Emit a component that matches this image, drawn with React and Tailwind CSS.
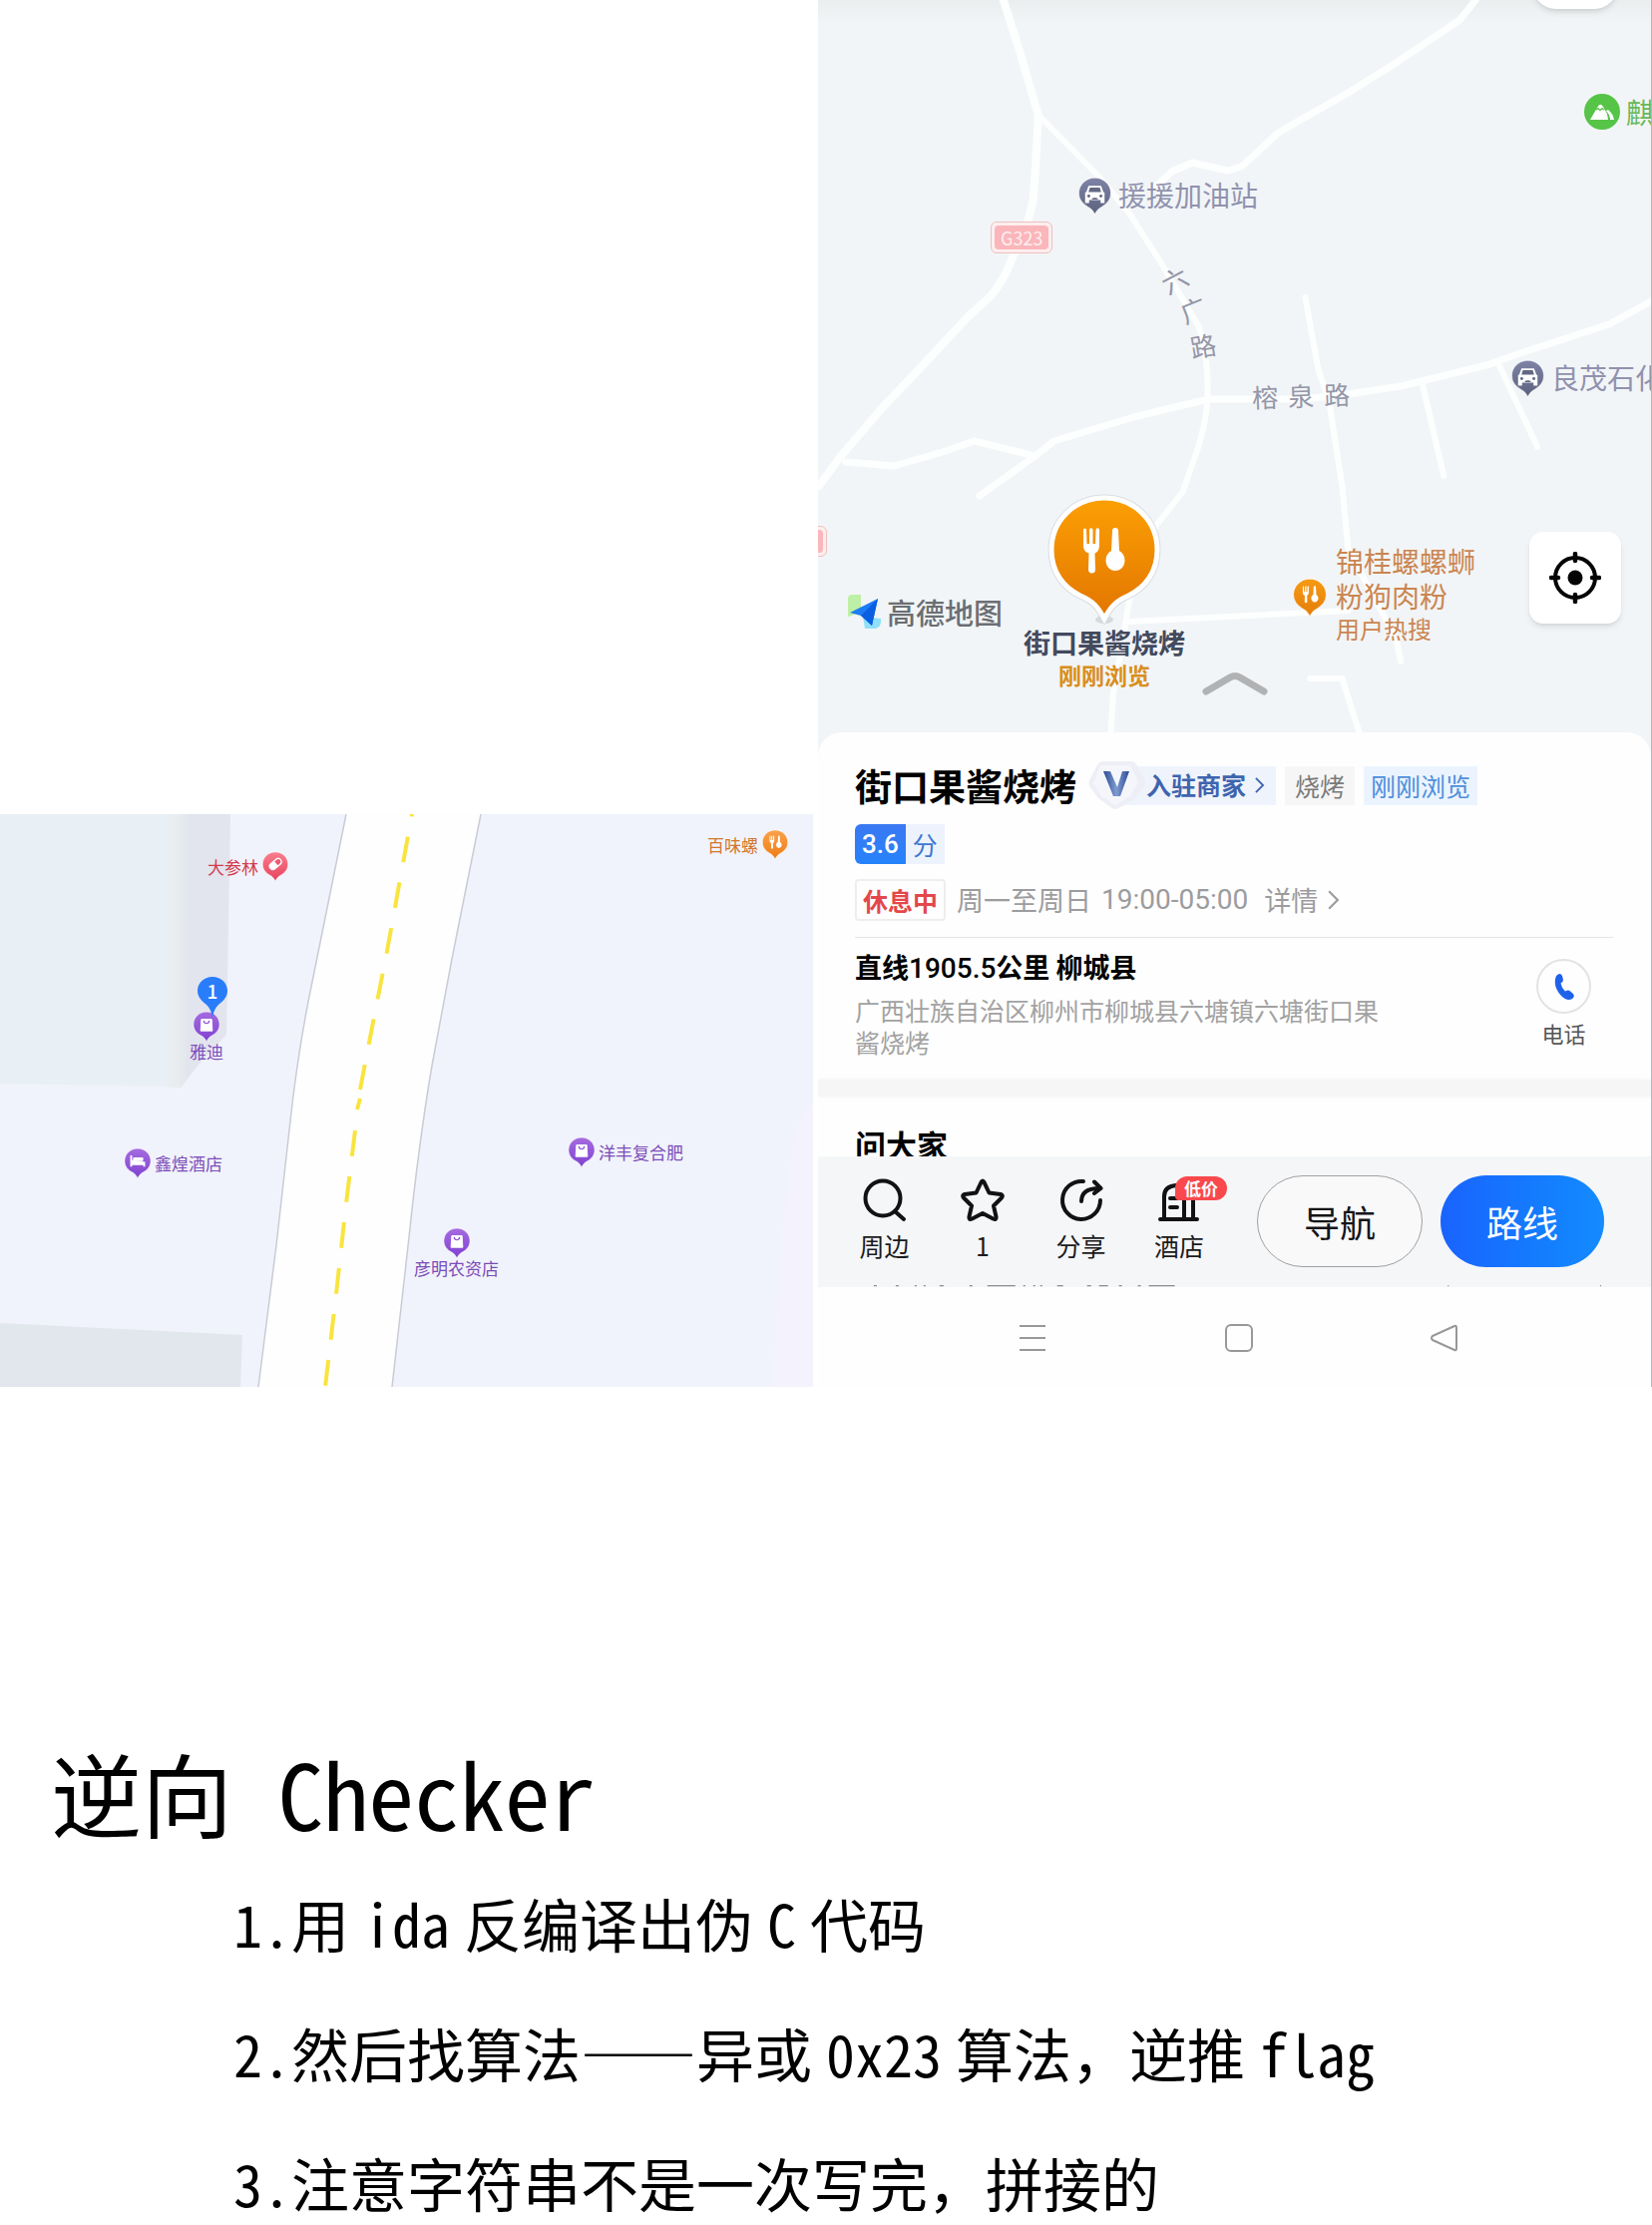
import React from 'react';

const shopPath = 'M15 1C7 1 1 7 1 14.500C1 20 4.500 24 9 26.500C12 28 13.500 30 15 33C16.500 30 18 28 21 26.500C25.500 24 29 20 29 14.500C29 7 23 1 15 1Z';

function ForkSpoon() {
  return (
    <g fill="#fff">
      <path d="M0 1a1.500 1.500 0 0 1 3 0l.5 14h2.500V1a1.500 1.500 0 0 1 3.500 0v14H12l.5-14a1.500 1.500 0 0 1 3.500 0v16c0 4-2 6.500-4.500 7.500l.5 16.500a3 3 0 0 1-7 0l.5-16.500C2 23.500 0 21 0 17Z" transform="translate(3 1)" />
      <path d="M32 3a3 3 0 0 1 6 0l1 20c3.500 2 5.500 5.500 5.500 9.500 0 6-4 10.500-9.500 10.500S25.500 38.500 25.500 32.500c0-4 2-7.500 5.500-9.500Z" />
    </g>
  );
}

function Glyph({ kind }) {
  if (kind === 'bag') {
    return (
      <g>
        <path d="M9.500 9h11l.8 12.500H8.700Z" fill="#fff" stroke="#fff" strokeLinejoin="round" />
        <path d="M12 10.500c.5 4 5.500 4 6 0" fill="none" stroke="#8f52d8" strokeWidth="1.300" />
      </g>
    );
  }
  if (kind === 'bed') {
    return (
      <g fill="#fff">
        <path d="M7 8.500h2v5l14 2v5h-2v-1.500H9v1.500H7Z" />
        <rect x="10" y="10.500" width="11" height="4" rx="1" />
      </g>
    );
  }
  if (kind === 'pill') {
    return (
      <g transform="rotate(-40 15 14)">
        <rect x="7" y="10" width="16" height="8.500" rx="4.200" fill="#fff" />
        <path d="M16 11.500h3a2.700 2.700 0 0 1 0 5.500h-3Z" fill="#ee5b70" />
      </g>
    );
  }
  if (kind === 'food') {
    return (
      <g transform="translate(8 7) scale(.32)">
        <ForkSpoon />
      </g>
    );
  }
  return (
    <g>
      <path d="M9.500 8h11l2 5.500 1 .5v9h-3.500v-2.500h-10V23H6.500v-9l1-.5Z" fill="#fff" />
      <path d="M10.700 9.500h8.600l1.200 4h-11Z" fill="#636884" />
      <circle cx="9.700" cy="17" r="1.300" fill="#636884" />
      <circle cx="20.300" cy="17" r="1.300" fill="#636884" />
      <path d="M12 20l1.500-1.500h3L18 20Z" fill="#636884" />
    </g>
  );
}

function Pin({ kind, from, to, className }) {
  const id = 'pin-' + kind + from.slice(1);
  return (
    <svg viewBox="0 0 30 34" className={className} aria-hidden="true">
      <defs>
        <linearGradient id={id} x1="0" y1="0" x2="0" y2="1">
          <stop offset="0" stopColor={from} />
          <stop offset="1" stopColor={to} />
        </linearGradient>
      </defs>
      <path d={shopPath} fill={'url(#' + id + ')'} stroke="#fff" strokeOpacity=".6" />
      <Glyph kind={kind} />
    </svg>
  );
}

function StreetMap() {
  return (
    <section aria-label="街道地图" className="relative h-[574px] overflow-hidden bg-[#f0f3fb] text-[17px] leading-[18px]">
      <svg viewBox="0 0 815 574" preserveAspectRatio="none" className="h-full w-full" aria-hidden="true">
        <defs>
          <linearGradient id="wall" x1="0" x2="1">
            <stop offset="0" stopColor="#e8eff5" />
            <stop offset=".5" stopColor="#e8ecee" />
            <stop offset="1" stopColor="#e0e4ed" />
          </linearGradient>
        </defs>
        <path d="M170 0H231L227 221L200 250L181 274L165 273Z" fill="#e2e5ee" />
        <path d="M165 0H192L186 268L181 274L165 273Z" fill="url(#wall)" />
        <path d="M0 0H167V273L0 270Z" fill="#e8eff5" />
        <path d="M0 510L243 522L241 574H0Z" fill="#e2e6ed" />
        <path d="M815 288L798 313L790 367L783 435L775 574H815Z" fill="#f4f2fd" />
        <path d="M347 0L313 168Q301 225 293 290L277 432L259 574H393L410 424Q420 328 433 252L453 145L482 0Z" fill="#fefefe" />
        <path d="M347 0L313 168Q301 225 293 290L277 432L259 574M393 574L410 424Q420 328 433 252L453 145L482 0" fill="none" stroke="#c9ccd3" strokeWidth="1.500" />
        <g fill="none" stroke="#f9e43f" strokeWidth="4">
          <path d="M413 0L388 137L370 229L361 276" strokeDasharray="26 20.500" strokeDashoffset="23.500" />
          <path d="M361 285L358 296" />
          <path d="M356 317L347 390L337 481L326 574" strokeDasharray="26 20.300" />
        </g>
      </svg>
      <div className="absolute top-[37px] left-[208px] flex items-center gap-[3px] text-[#d33a4c]">
        大参林
        <Pin kind="pill" from="#f8808e" to="#e8405c" className="h-[31px] w-7" />
      </div>
      <div className="absolute top-[197px] left-[187px] flex w-10 flex-col items-center text-[#7d4bb8]">
        <Pin kind="bag" from="#a56be0" to="#7f41d0" className="h-8 w-7" />
        <span className="whitespace-nowrap">雅迪</span>
      </div>
      <div className="absolute top-[162px] left-[197px] h-[42px] w-8">
        <svg viewBox="0 0 32 42" className="h-full w-full" aria-hidden="true">
          <path d="M16 1C7 1 1 7.500 1 15C1 21 5 25 10 29C14 33 15 37 16 42C17 37 18 33 22 29C27 25 31 21 31 15C31 7.500 25 1 16 1Z" fill="#2a7dfa" />
        </svg>
        <span className="absolute inset-x-0 top-[6px] text-center text-[19px] font-medium text-white">1</span>
      </div>
      <div className="absolute top-[334px] left-[124px] flex items-center gap-[3px] text-[#7d4bb8]">
        <Pin kind="bed" from="#a56be0" to="#7f41d0" className="h-8 w-7" />
        鑫煌酒店
      </div>
      <div className="absolute top-[323px] left-[569px] flex items-center gap-[3px] text-[#7d4bb8]">
        <Pin kind="bag" from="#a56be0" to="#7f41d0" className="h-8 w-7" />
        洋丰复合肥
      </div>
      <div className="absolute top-[414px] left-[415px] flex flex-col items-center text-[#7d4bb8]">
        <Pin kind="bag" from="#a56be0" to="#7f41d0" className="h-8 w-7" />
        彦明农资店
      </div>
      <div className="absolute top-[15px] right-6 flex items-center gap-[3px] text-[#d2762a]">
        百味螺
        <Pin kind="food" from="#f9a24c" to="#ef7c12" className="h-[31px] w-7" />
      </div>
    </section>
  );
}

function PlaceMap() {
  return (
    <section aria-label="高德地图" className="relative h-[758px] overflow-hidden bg-[#f2f5f7]">
      <svg viewBox="0 0 836 758" preserveAspectRatio="none" className="h-full w-full" aria-hidden="true">
        <defs>
          <linearGradient id="shade" x1="0" y1="0" x2="0" y2="1">
            <stop offset="0" stopColor="#ebeeef" />
            <stop offset="1" stopColor="#f2f5f7" />
          </linearGradient>
        </defs>
        <rect width="836" height="24" fill="url(#shade)" />
        <g fill="none" stroke="#fdfefe" strokeWidth="8" strokeLinejoin="round" strokeLinecap="round">
          <path d="M186 0L202 50L221 115Q219 160 216 200Q210 230 197 253Q188 280 173 297L151 317L92 380L66 407L23 457L1 487" />
          <path d="M221 115L280 175L312 213L344 263L382 327Q390 350 391 380V400Q389 425 382 447L366 493L339 527L312 603L309 623L296 697L293 750" strokeWidth="6" />
          <path d="M660 0L644 20L580 63L532 93L462 133L425 167L411 171L376 163L355 172L339 187" strokeWidth="7" />
          <path d="M836 302L794 325L708 353L671 366L585 387L532 395L488 400H392L317 418L237 442L218 457L157 442L125 453L76 467L28 463M218 457L162 497" strokeWidth="7" />
          <path d="M489 298L502 370L513 403L526 487L532 550L580 640L585 663M607 387L628 477M684 367L722 448M312 623L532 612M494 680H526L545 740" strokeWidth="6" />
        </g>
      </svg>

      <div className="absolute -top-20 right-[33px] h-[89px] w-[86px] rounded-3xl bg-white shadow-md" />

      <div className="absolute top-[177px] left-[260px] flex items-center gap-[6px] text-[28px] leading-9 whitespace-nowrap text-[#9092ae]">
        <Pin kind="car" from="#7f84a8" to="#5a607c" className="h-[39px] w-[35px]" />
        <span className="mb-[3px]">援援加油站</span>
      </div>
      <div className="absolute top-[222px] left-[173px] rounded-md border border-[#efc0c0] bg-[#fdeeee] p-[3px]">
        <div className="rounded-sm bg-[#fab6bb] px-[6px] text-[18px] leading-6 text-[#fdeeee]">G323</div>
      </div>
      <div className="absolute top-[527px] -left-10 h-[31px] w-[49px] rounded-md border border-[#efc0c0] bg-[#fdeeee] p-[3px]">
        <div className="h-full rounded-sm bg-[#fab6bb]" />
      </div>
      <span className="absolute top-[267px] left-[344px] -rotate-[28deg] text-[26px] leading-[26px] text-[#9597a8]">六</span>
      <span className="absolute top-[297px] left-[363px] -rotate-[22deg] text-[26px] leading-[26px] text-[#9597a8]">广</span>
      <span className="absolute top-[333px] left-[373px] -rotate-[10deg] text-[26px] leading-[26px] text-[#9597a8]">路</span>
      <div className="absolute top-[380px] left-[435px] flex -rotate-2 gap-[10px] text-[26px] leading-8 text-[#9597a8]">
        <span>榕</span>
        <span>泉</span>
        <span>路</span>
      </div>

      <div className="absolute top-[94px] left-[768px] flex items-center gap-[6px] text-[28px] leading-9 whitespace-nowrap text-[#69b85a]">
        <svg viewBox="0 0 36 36" className="h-9 w-9" aria-hidden="true">
          <circle cx="18" cy="18" r="18" fill="#56c447" />
          <path d="M6 26L13 14Q16 8 19 13L23 20L24 26ZM24 16Q29 20 30 26H26Q26 21 22 17Z" fill="#fff" />
          <path d="M12 16l2-1.500 2 2 2-2 2 1.500" fill="none" stroke="#56c447" strokeWidth="1.300" />
        </svg>
        麒麟
      </div>
      <div className="absolute top-[360px] left-[694px] flex items-center gap-[6px] text-[28px] leading-9 whitespace-nowrap text-[#9092ae]">
        <Pin kind="car" from="#7f84a8" to="#5a607c" className="h-[39px] w-[35px]" />
        <span className="mb-[3px]">良茂石化</span>
      </div>

      <div className="absolute top-[595px] left-[30px] flex items-center gap-[6px] text-[29px] leading-9 font-medium text-[#6b6e73]">
        <svg viewBox="0 0 33 34" className="h-[34px] w-[33px]" aria-hidden="true">
          <path d="M0 4Q0 0 4 0H13V18L0 22Z" fill="#bdf0a6" />
          <path d="M15 22L33 24V28Q32 34 26 34H17Z" fill="#8fe0f8" />
          <path d="M30 4L2 18L13 21L24 31Z" fill="#1c7cf4" />
          <path d="M30 4L13 21L24 31Z" fill="#0a5fe0" />
        </svg>
        高德地图
      </div>

      <div className="absolute top-[495px] left-[205px] flex w-[164px] flex-col items-center">
        <svg viewBox="0 0 114 131" className="h-[131px] w-[114px]" aria-hidden="true">
          <defs>
            <linearGradient id="main-pin" x1="0" y1="0" x2="0" y2="1">
              <stop offset="0" stopColor="#fca004" />
              <stop offset="1" stopColor="#e27500" />
            </linearGradient>
          </defs>
          <ellipse cx="57" cy="126" rx="9" ry="4" fill="#d5d9dc" />
          <path d="M57 4C27 4 4 27 4 56C4 78 16 94 33 102C47 108 51 114 57 125C63 114 67 108 81 102C98 94 110 78 110 56C110 27 87 4 57 4Z" fill="url(#main-pin)" stroke="#d9dde2" strokeWidth="7" />
          <path d="M57 4C27 4 4 27 4 56C4 78 16 94 33 102C47 108 51 114 57 125C63 114 67 108 81 102C98 94 110 78 110 56C110 27 87 4 57 4Z" fill="url(#main-pin)" stroke="#fff" strokeWidth="5" />
          <g transform="translate(33 34)">
            <ForkSpoon />
          </g>
        </svg>
        <span className="text-[27px] leading-9 font-bold whitespace-nowrap text-[#434a5e]">街口果酱烧烤</span>
        <span className="text-[23px] leading-7 font-bold whitespace-nowrap text-[#d98e1c]">刚刚浏览</span>
      </div>

      <svg viewBox="0 0 66 24" className="absolute top-[673px] left-[385px] h-6 w-[66px]" aria-hidden="true">
        <path d="M4 20L28 6Q33 3 38 6L62 20" fill="none" stroke="#b1b2b4" strokeWidth="7" strokeLinecap="round" />
      </svg>

      <div className="absolute top-[545px] left-[475px] flex items-center gap-2 text-[#cb8550]">
        <Pin kind="food" from="#f69a14" to="#e57d08" className="mt-2 h-10 w-9" />
        <div className="text-[28px] leading-[35px] whitespace-nowrap">
          锦桂螺螺蛳
          <br />
          粉狗肉粉
          <div className="text-[24px] leading-[30px]">用户热搜</div>
        </div>
      </div>

      <button type="button" aria-label="定位" className="absolute top-[533px] right-[30px] flex h-[92px] w-[92px] items-center justify-center rounded-[14px] bg-white shadow-md">
        <svg viewBox="0 0 52 52" className="h-[52px] w-[52px]" aria-hidden="true">
          <circle cx="26" cy="26" r="20" fill="none" stroke="#050505" strokeWidth="4" />
          <circle cx="26" cy="26" r="7.500" fill="#050505" />
          <path d="M26 2V9M26 43V50M2 26H9M43 26H50" stroke="#050505" strokeWidth="4.500" strokeLinecap="round" />
        </svg>
      </button>
    </section>
  );
}

function Chevron({ className }) {
  return (
    <svg viewBox="0 0 12 20" className={className} aria-hidden="true">
      <path d="M2 2L10 10L2 18" fill="none" stroke="currentColor" strokeWidth="2" />
    </svg>
  );
}

function PlaceSheet() {
  return (
    <section className="relative -mt-6 rounded-t-3xl bg-[#fefefe] pt-[25px]">
      <div className="px-[37px]">
        <div className="flex h-[56px] items-center">
          <h2 className="text-[37px] leading-[56px] font-bold whitespace-nowrap text-black">街口果酱烧烤</h2>
          <a href="#merchant" className="relative ml-8 flex h-[39px] w-[168px] items-center bg-[#eff4fc] pl-[38px] text-[25px] font-bold whitespace-nowrap text-[#3f64ae]">
            <svg viewBox="0 0 58 50" className="absolute -top-[6px] -left-[20px] h-[50px] w-[58px]" aria-hidden="true">
              <defs>
                <linearGradient id="vee" x1="0" x2="1">
                  <stop offset="0" stopColor="#2a4a94" />
                  <stop offset=".5" stopColor="#7f9bd0" />
                  <stop offset="1" stopColor="#2c4c97" />
                </linearGradient>
              </defs>
              <path d="M10 3Q12 1 15 1H42Q46 1 48 4L57 20Q58 24 55 28L46 39L30 48Q27 50 24 48L10 38L1 26Q0 23 1 20Z" fill="#eeeff6" />
              <path d="M12 5H42L50 22L42 36L27 45L13 36L5 23Z" fill="#f4f6fb" />
              <path d="M15 11H22L29 27L34 11H41L32 36H25Z" fill="url(#vee)" />
            </svg>
            入驻商家
            <Chevron className="ml-2 h-[18px] w-[11px]" />
          </a>
          <span className="ml-[9px] bg-[#f6f6f6] px-[10px] text-[25px] leading-[39px] whitespace-nowrap text-[#7b7b7b]">烧烤</span>
          <span className="ml-[9px] bg-[#ebf4fe] px-[7px] text-[25px] leading-[39px] whitespace-nowrap text-[#4f8edb]">刚刚浏览</span>
        </div>
        <div className="mt-[11px] flex text-[25px] leading-10">
          <span className="rounded-l-md bg-linear-to-b from-[#3a78f2] to-[#2583fb] px-[7px] font-['Roboto','Noto_Sans_CJK_SC',sans-serif] text-[26px] font-medium text-white">3.6</span>
          <span className="bg-[#edf3fd] px-[7px] text-[#3f77d0]">分</span>
        </div>
        <div className="mt-[15px] flex items-center text-[27px] leading-10 whitespace-nowrap text-[#9c9c9e]">
          <span className="rounded-sm border-2 border-[#efeded] px-[6px] text-[25px] leading-[38px] font-bold text-[#e4474b]">休息中</span>
          <span className="ml-[11px]">周一至周日</span>
          <span className="ml-[10px] font-['Roboto','Noto_Sans_CJK_SC',sans-serif] text-[28px]">19:00-05:00</span>
          <a href="#hours" className="ml-4 flex items-center">
            详情
            <Chevron className="ml-[9px] h-[22px] w-[13px]" />
          </a>
        </div>
      </div>
      <div className="mx-[37px] mt-4 border-t border-[#e6e6e6]" />
      <div className="flex h-[142px] justify-between pr-[60px] pl-[37px] pt-[9px]">
        <div>
          <p className="text-[27px] leading-10 font-bold whitespace-nowrap text-black">
            直线<span className="font-['Roboto',sans-serif] text-[28px] font-medium">1905.5</span>公里 柳城县
          </p>
          <p className="mt-[5px] w-[546px] text-[25px] leading-8 text-[#a2a2a2]">广西壮族自治区柳州市柳城县六塘镇六塘街口果酱烧烤</p>
        </div>
        <button type="button" className="flex flex-col items-center pt-3 text-[22px] leading-8 text-[#555]">
          <span className="flex h-[55px] w-[55px] items-center justify-center rounded-full border-2 border-[#e3e3e5]">
            <svg viewBox="0 0 22 28" className="h-7 w-[22px]" aria-hidden="true">
              <path d="M3 3Q7-1 9 3L10 7Q10 9 7.500 10.500Q8.500 15.500 12 18.500Q15 17 16.500 18L20 21Q22 24 19 26Q14 29 8 23Q-1 13 3 3Z" fill="#1f62ea" />
            </svg>
          </span>
          <span className="mt-[3px]">电话</span>
        </button>
      </div>
      <div className="h-[17px] bg-[#f6f6f6] shadow-[0_0_4px_#f6f6f6]" />
      <h3 className="h-[60px] overflow-hidden px-[37px] pt-[22px] text-[31px] leading-[52px] font-bold text-black">问大家</h3>
    </section>
  );
}

function ActionIcon({ children }) {
  return (
    <svg viewBox="0 0 44 44" className="h-11 w-11" fill="none" stroke="#121214" strokeWidth="4" strokeLinecap="round" strokeLinejoin="round" aria-hidden="true">
      {children}
    </svg>
  );
}

function ActionBar() {
  return (
    <div className="relative flex h-[131px] items-start bg-[#f5f6f8] pt-[19px] pr-[47px] pl-[17px]">
      <div className="flex text-[25px] leading-9 whitespace-nowrap text-[#1b1b1d]">
        <button type="button" className="flex w-[99px] flex-col items-center pt-[3px]">
          <ActionIcon>
            <circle cx="20" cy="20" r="17.500" />
            <path d="M32 33L41 41" />
          </ActionIcon>
          <span className="mt-[5px]">周边</span>
        </button>
        <button type="button" className="flex w-[98px] flex-col items-center pt-[3px]">
          <ActionIcon>
            <path d="M20.500 4Q22 1 23.500 4L28.500 14.500L40 16Q43 17 41 19.500L33 27.500L35.500 38.500Q36 42 32.500 40.500L22 35L11.500 40.500Q8 42 8.500 38.500L11 27.500L3 19.500Q1 17 4 16L15.500 14.500Z" />
          </ActionIcon>
          <span className="mt-[5px]">1</span>
        </button>
        <button type="button" className="flex w-[99px] flex-col items-center pt-[3px]">
          <ActionIcon>
            <path d="M24 3A19 19 0 1 0 41 22" />
            <path d="M22 23C22 14 29 10 40 10M35 3.500L41.500 10L35 15" />
          </ActionIcon>
          <span className="mt-[5px]">分享</span>
        </button>
        <button type="button" className="relative flex w-[98px] flex-col items-center pt-[3px]">
          <ActionIcon>
            <path d="M3 41H40M7 41V18Q7 8 19 7H22Q27 7 27 12V41M27 18H36V41M13 20H20M13 29H20" />
          </ActionIcon>
          <span className="mt-[5px]">酒店</span>
          <span className="absolute top-[1px] left-[45px] rounded-xl rounded-bl-sm bg-[#f9494d] px-[9px] text-[17px] leading-6 font-bold text-white">低价</span>
        </button>
      </div>
      <div className="ml-[29px] flex flex-1 gap-[18px] text-[36px]">
        <button type="button" className="h-[92px] flex-1 rounded-full border border-[#a0a0a2] bg-[#f9f9fa] text-[#151517]">导航</button>
        <button type="button" className="h-[92px] flex-1 rounded-full bg-linear-to-r from-[#1a63fe] to-[#148bfe] text-white">路线</button>
      </div>
      <svg viewBox="0 0 836 3" preserveAspectRatio="none" className="absolute bottom-0 left-0 h-[2px] w-full" aria-hidden="true">
        <path d="M56 1h3M78 1h3M97 1h2M106 1h2M122 1h4M152 1h3M170 1h28M206 1h2M216 1h2M223 1h2M240 1h6M270 1h4M282 1h9M302 1h3M321 1h3M332 1h26M632 1h1M785 1h1" stroke="#8d8d8f" strokeWidth="2" />
      </svg>
    </div>
  );
}

function SystemNav() {
  return (
    <nav aria-label="系统导航" className="flex h-[100px] justify-between bg-[#fefefe] pt-[35px] pr-[192px] pl-[200px]">
      <button type="button" aria-label="菜单" className="h-8 w-[30px]">
        <svg viewBox="0 0 30 32" className="h-8 w-[30px]" stroke="#98989a" strokeWidth="2" aria-hidden="true">
          <path d="M2 4H28M2 16H28M2 28H28" />
        </svg>
      </button>
      <button type="button" aria-label="主页" className="h-8 w-8">
        <svg viewBox="0 0 32 32" className="h-8 w-8" fill="none" stroke="#98989a" strokeWidth="2" aria-hidden="true">
          <rect x="3" y="3" width="26" height="26" rx="5" />
        </svg>
      </button>
      <button type="button" aria-label="返回" className="h-8 w-[30px]">
        <svg viewBox="0 0 30 32" className="h-8 w-[30px]" fill="none" stroke="#98989a" strokeWidth="2" strokeLinejoin="round" aria-hidden="true">
          <path d="M25 4Q27 3 27 6V26Q27 29 25 28L3 18Q1 16 3 14Z" />
        </svg>
      </button>
    </nav>
  );
}

export default function App() {
  return (
    <main lang="zh-CN" className="min-h-screen overflow-hidden bg-white font-['Noto_Sans_CJK_SC',sans-serif]">
      <div className="grid grid-cols-[815fr_836fr] items-end gap-[5px]">
        <StreetMap />
        <div className="overflow-hidden border-r border-[#b5b6b8]">
          <PlaceMap />
          <PlaceSheet />
          <ActionBar />
          <SystemNav />
        </div>
      </div>
      <article className="pt-[338px] pl-[51px] font-['Noto_Sans_Mono_CJK_SC','Noto_Sans_CJK_SC',monospace] text-black">
        <h1 className="text-[91px] leading-[134px] whitespace-pre">逆向 Checker</h1>
        <ol className="mt-[29px] flex flex-col gap-[58px] pl-[183px] text-[58px] leading-[72px] whitespace-nowrap">
          <li>1.用<span className="mx-[14px]">ida</span>反编译出伪<span className="mx-[14px]">C</span>代码</li>
          <li>2.然后找算法——异或<span className="mx-[14px]">0x23</span>算法，逆推<span className="mx-[14px]">flag</span></li>
          <li>3.注意字符串不是一次写完，拼接的</li>
        </ol>
      </article>
    </main>
  );
}
